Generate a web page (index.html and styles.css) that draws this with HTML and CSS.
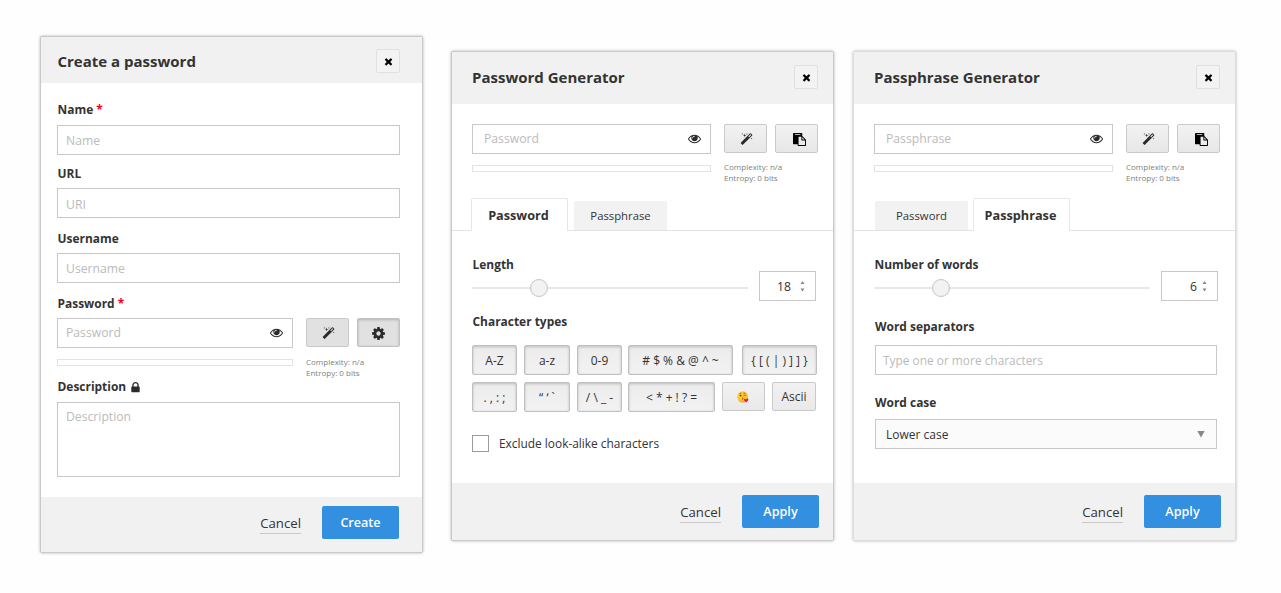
FILE: index.html
```html
<!DOCTYPE html>
<html lang="en">
<head>
<meta charset="utf-8">
<title>Password generator</title>
<link rel="stylesheet" href="styles.css">
</head>
<body>
<svg class="sprite" width="0" height="0">
  <symbol id="i-times" viewBox="0 0 1792 1792"><path d="M1490 1322q0 40-28 68l-136 136q-28 28-68 28t-68-28l-294-294-294 294q-28 28-68 28t-68-28l-136-136q-28-28-28-68t28-68l294-294-294-294q-28-28-28-68t28-68l136-136q28-28 68-28t68 28l294 294 294-294q28-28 68-28t68 28l136 136q28 28 28 68t-28 68l-294 294 294 294q28 28 28 68z"/></symbol>
  <symbol id="i-eye" viewBox="0 0 1792 1792"><path d="M1664 960q-152-236-381-353 61 104 61 225 0 185-131.500 316.500t-316.500 131.500-316.500-131.500-131.500-316.500q0-121 61-225-229 117-381 353 133 205 333.500 326.500t434.500 121.500 434.500-121.500 333.500-326.500zm-720-384q0-20-14-34t-34-14q-125 0-214.500 89.500t-89.500 214.500q0 20 14 34t34 14 34-14 14-34q0-86 61-147t147-61q20 0 34-14t14-34zm848 384q0 34-20 69-140 230-376.500 368.500t-499.500 138.500-499.500-139-376.500-368q-20-35-20-69t20-69q140-229 376.500-368t499.500-139 499.500 139 376.500 368q20 35 20 69z"/></symbol>
  <symbol id="i-cog" viewBox="0 0 1792 1792"><path d="M1152 896q0-106-75-181t-181-75-181 75-75 181 75 181 181 75 181-75 75-181zm512-109v222q0 12-8 23t-20 13l-185 28q-19 54-39 91 35 50 107 138 10 12 10 25t-9 23q-27 37-99 108t-94 71q-12 0-26-9l-138-108q-44 23-91 38-16 136-29 186-7 28-36 28h-222q-14 0-24.500-8.500t-11.500-21.500l-28-184q-49-16-90-37l-141 107q-10 9-25 9-14 0-25-11-126-114-165-168-7-10-7-23 0-12 8-23 15-21 51-66.500t54-70.500q-27-50-41-99l-183-27q-13-2-21-12.500t-8-23.500v-222q0-12 8-23t19-13l186-28q14-46 39-92-40-57-107-138-10-12-10-24 0-10 9-23 26-36 98.500-107.500t94.500-71.500q13 0 26 10l138 107q44-23 91-38 16-136 29-186 7-28 36-28h222q14 0 24.500 8.500t11.500 21.500l28 184q49 16 90 37l142-107q9-9 24-9 13 0 25 10 129 119 165 170 7 8 7 22 0 12-8 23-15 21-51 66.500t-54 70.500q26 50 41 98l183 28q13 2 21 12.500t8 23.500z"/></symbol>
  <symbol id="i-lock" viewBox="0 0 1792 1792"><path d="M640 768h512v-192q0-106-75-181t-181-75-181 75-75 181v192zm832 96v576q0 40-28 68t-68 28h-960q-40 0-68-28t-28-68v-576q0-40 28-68t68-28h32v-192q0-184 132-316t316-132 316 132 132 316v192h32q40 0 68 28t28 68z"/></symbol>
  <symbol id="i-paste" viewBox="0 0 1792 1792"><path d="M768 1664h896v-640h-416q-40 0-68-28t-28-68v-416h-384v1152zm256-1440v-64q0-13-9.500-22.500t-22.500-9.500h-704q-13 0-22.500 9.500t-9.500 22.500v64q0 13 9.500 22.500t22.500 9.500h704q13 0 22.500-9.500t9.500-22.500zm256 672h299l-299-299v299zm512 128v672q0 40-28 68t-68 28h-960q-40 0-68-28t-28-68v-160h-544q-40 0-68-28t-28-68v-1344q0-40 28-68t68-28h1088q40 0 68 28t28 68v328q21 13 36 28l408 408q28 28 48 76t20 88z"/></symbol>
  <symbol id="i-magic" viewBox="0 0 1792 1792"><path d="M1254 581l293-293-107-107-293 293zm447-293q0 27-18 45l-1286 1286q-18 18-45 18t-45-18l-198-198q-18-18-18-45t18-45l1286-1286q18-18 45-18t45 18l198 198q18 18 18 45zm-1351-190l98 30-98 30-30 98-30-98-98-30 98-30 30-98zm350 162l196 60-196 60-60 196-60-196-196-60 196-60 60-196zm930 478l98 30-98 30-30 98-30-98-98-30 98-30 30-98zm-640-640l98 30-98 30-30 98-30-98-98-30 98-30 30-98z"/></symbol>
  <symbol id="i-spin" viewBox="0 0 5 12"><path d="M.3 3.300L2.500 0l2.200 3.300zM.3 8.200h4.400L2.500 11.500z"/></symbol>
  <symbol id="i-kiss" viewBox="0 0 12 12"><circle cx="5.800" cy="5.800" r="5.500" fill="#fcc531"/><path d="M1.500 9.200a5.500 5.500 0 0 0 8 .6" fill="none" stroke="#ef9a2c" stroke-width=".9"/><circle cx="3.600" cy="4.500" r=".85" fill="#5e3a14"/><path d="M6.500 4.700q1.200-1 2.600-.2M2.400 2.800l1.700-.6M6.600 2.100l1.900.3M5 6.700q1.600.1.700.9 1.200.4-.5 1.300" fill="none" stroke="#6b4015" stroke-width=".6"/><path d="M9.300 11.600L6.900 9.300q-.4-1.600 1.100-1.500l.9.600q.8-1.500 2-.8.900.9.200 2z" fill="#e5223b"/></symbol>
</svg>
<main class="board">
  <section class="dialog dialog-create">
    <header class="head"><h2 class="title">Create a password</h2><button class="close"><svg class="ic-x"><use href="#i-times"/></svg></button></header>
    <div class="body">
      <div class="field field-name"><div class="label">Name <span class="req">*</span></div><div class="input">Name</div></div>
      <div class="field"><div class="label">URL</div><div class="input input-url">URI</div></div>
      <div class="field field-user"><div class="label">Username</div><div class="input">Username</div></div>
      <div class="field field-user">
        <div class="label">Password <span class="req">*</span></div>
        <div class="secret">
          <div class="entry"><div class="input">Password<svg class="ic-eye"><use href="#i-eye"/></svg></div><div class="meter"></div></div>
          <div class="tools">
            <div class="tool-row"><button class="btn tool flat"><svg class="ic-magic"><use href="#i-magic"/></svg></button><button class="btn tool flat pressed"><svg class="ic-cog"><use href="#i-cog"/></svg></button></div>
            <div class="hint">Complexity: n/a<br>Entropy: 0 bits</div>
          </div>
        </div>
      </div>
      <div class="field field-desc"><div class="label">Description <svg class="ic-lock"><use href="#i-lock"/></svg></div><div class="input area">Description</div></div>
    </div>
    <footer class="foot"><a class="cancel">Cancel</a><button class="primary">Create</button></footer>
  </section>

  <section class="dialog dialog-gen">
    <header class="head"><h2 class="title">Password Generator</h2><button class="close"><svg class="ic-x"><use href="#i-times"/></svg></button></header>
    <div class="body">
      <div class="secret">
        <div class="entry"><div class="input">Password<svg class="ic-eye"><use href="#i-eye"/></svg></div><div class="meter"></div></div>
        <div class="tools">
          <div class="tool-row"><button class="btn tool"><svg class="ic-magic"><use href="#i-magic"/></svg></button><button class="btn tool"><svg class="ic-paste"><use href="#i-paste"/></svg></button></div>
          <div class="hint">Complexity: n/a<br>Entropy: 0 bits</div>
        </div>
      </div>
      <nav class="tabs"><span class="tab active">Password</span><span class="tab">Passphrase</span></nav>
      <div class="range"><div class="range-main"><div class="label">Length</div><div class="slider"><span class="knob"></span></div></div><div class="number">18<svg class="ic-spin"><use href="#i-spin"/></svg></div></div>
      <div class="label label-types">Character types</div>
      <div class="chips">
        <div class="chip-row"><button class="btn chip pressed w-a">A-Z</button><button class="btn chip pressed w-b">a-z</button><button class="btn chip pressed w-h">0-9</button><button class="btn chip pressed w-c"># $ % &amp; @ ^ ~</button><button class="btn chip pressed w-d">{ [ ( | ) ] ] }</button></div>
        <div class="chip-row"><button class="btn chip pressed w-a">. , : ;</button><button class="btn chip pressed w-b">“ ‘ `</button><button class="btn chip pressed w-h">/ \ _ -</button><button class="btn chip pressed w-e">&lt; * + ! ? =</button><button class="btn chip w-f"><svg class="ic-kiss"><use href="#i-kiss"/></svg></button><button class="btn chip w-g">Ascii</button></div>
      </div>
      <label class="check"><span class="box"></span>Exclude look-alike characters</label>
    </div>
    <footer class="foot"><a class="cancel">Cancel</a><button class="primary">Apply</button></footer>
  </section>

  <section class="dialog dialog-gen dialog-phrase">
    <header class="head"><h2 class="title">Passphrase Generator</h2><button class="close"><svg class="ic-x"><use href="#i-times"/></svg></button></header>
    <div class="body">
      <div class="secret">
        <div class="entry"><div class="input">Passphrase<svg class="ic-eye"><use href="#i-eye"/></svg></div><div class="meter"></div></div>
        <div class="tools">
          <div class="tool-row"><button class="btn tool"><svg class="ic-magic"><use href="#i-magic"/></svg></button><button class="btn tool"><svg class="ic-paste"><use href="#i-paste"/></svg></button></div>
          <div class="hint">Complexity: n/a<br>Entropy: 0 bits</div>
        </div>
      </div>
      <nav class="tabs"><span class="tab">Password</span><span class="tab active">Passphrase</span></nav>
      <div class="range"><div class="range-main"><div class="label">Number of words</div><div class="slider"><span class="knob"></span></div></div><div class="number tight">6<svg class="ic-spin"><use href="#i-spin"/></svg></div></div>
      <div class="options">
        <div class="label">Word separators</div>
        <div class="input input-sep">Type one or more characters</div>
        <div class="label">Word case</div>
        <div class="select">Lower case<span class="caret"></span></div>
      </div>
    </div>
    <footer class="foot"><a class="cancel">Cancel</a><button class="primary">Apply</button></footer>
  </section>
</main>
</body>
</html>
```

FILE: styles.css
```css
* { box-sizing: border-box; }
body { margin: 0; background: #fefefe; color: #333; font-family: "Open Sans", "Noto Sans", sans-serif; font-size: 12px; }
button { font-family: inherit; padding: 0; color: inherit; }
svg { display: block; fill: #2b2b2b; }
.sprite { position: absolute; }

.board { display: flex; align-items: flex-start; width: 1281px; height: 593px; padding: 36px 0 0 40px; overflow: hidden; }
.dialog { display: flex; flex-direction: column; flex: none; width: 383px; height: 517px; border: 1px solid #c9c9c9; border-radius: 2px; background: #fff; box-shadow: 0 0 3px rgba(0,0,0,.3); }
.dialog-gen { height: 490px; margin: 15px 0 0 28px; }
.dialog-phrase { margin-left: 19px; border-color: #dcdcdc; }

.head { display: flex; align-items: center; justify-content: space-between; flex: none; height: 46px; padding: 2px 22px 0 16.5px; background: #f1f1f1; }
.title { margin: 0; font-size: 15px; font-weight: 700; line-height: 20px; }
.close { display: flex; align-items: center; justify-content: center; width: 24px; height: 24px; border: 1px solid #e0e0e0; border-radius: 2px; background: #f3f3f3; }
.ic-x { width: 11px; height: 11px; fill: #000; }
.body { flex: 1; padding: 18px 22px 0 16px; }
.dialog-gen .head { height: 52px; padding: 0 15px 2px 20px; }
.dialog-gen .body { padding: 20px 0 0 20px; }

.label { display: flex; align-items: center; gap: 4px; height: 18px; padding-left: .5px; font-size: 11.950px; font-weight: 700; line-height: 18px; }
.req { margin-left: -1px; color: #f8001a; }
.field { display: flex; flex-direction: column; gap: 5px; margin-top: 10px; }
.field-name { gap: 6px; margin-top: 0; }
.field-user { margin-top: 12px; }
.field-desc { gap: 6px; margin-top: -1px; }
.input { display: flex; align-items: center; justify-content: space-between; height: 30px; padding: 0 9px 0 8px; border: 1px solid #c8c8c8; background: #fff; color: #bbb; font-size: 12.200px; }
.input-url { padding-top: 2px; }
.area { align-items: flex-start; height: 75px; padding-top: 5px; line-height: 17px; }
.ic-eye { width: 13px; height: 13px; }
.ic-lock { width: 13px; height: 13px; margin-left: -1px; }

.secret { display: flex; gap: 13px; height: 61px; }
.secret .input { padding-bottom: 1px; }
.entry { width: 236px; }
.meter { height: 7px; margin-top: 11px; border: 1px solid #e3e3e3; }
.tool-row { display: flex; gap: 8px; }
.btn { display: flex; align-items: center; justify-content: center; border: 1px solid #c9c9c9; border-radius: 2px; background: linear-gradient(#f2f2f2, #e7e7e7); }
.tool { width: 43px; height: 29px; }
.flat { background: #e1e1e1; }
.pressed { box-shadow: inset 0 1px 3px rgba(0,0,0,.2); border-color: #c0c0c0; }
.ic-magic { width: 13px; height: 13px; margin: 1px 0 0 2px; }
.ic-cog { width: 15px; height: 15px; margin-top: 1px; }
.ic-paste { width: 13px; height: 13px; margin: 1px 0 0 5px; fill: #000; }
.hint { margin: 8px 0 0; color: #808080; font-size: 8px; line-height: 11px; }
.dialog-create .hint { margin-top: 9px; }
.dialog-gen .secret { height: 74px; }
.dialog-gen .entry { width: 239px; }
.dialog-gen .entry .input { padding-left: 11px; }

.tabs { display: flex; align-items: flex-end; gap: 6px; height: 33px; margin-left: -20px; padding-left: 19px; border-bottom: 1px solid #e3e3e3; }
.dialog-phrase .tabs { gap: 5px; padding-left: 21px; }
.tab { display: flex; align-items: center; justify-content: center; width: 93px; height: 29px; border-radius: 2px 2px 0 0; background: #f2f2f2; font-size: 11.300px; }
.active { width: 97px; height: 33px; margin-bottom: -1px; padding-right: 2px; border: 1px solid #e6e6e6; border-bottom: 0; background: #fff; font-size: 12.700px; font-weight: 700; }

.range { display: flex; gap: 11px; height: 70px; padding-top: 25px; }
.range-main { width: 276px; }
.slider { display: flex; align-items: center; height: 2px; margin-top: 13px; background: #e8e8e8; }
.knob { width: 18px; height: 18px; margin-left: 57.500px; border: 1px solid #c6c6c6; border-radius: 50%; background: #f2f2f2; }
.number { display: flex; align-items: center; justify-content: flex-end; gap: 9px; width: 57px; height: 30px; margin-top: 15px; padding-right: 10px; border: 1px solid #c8c8c8; font-size: 12.200px; }
.tight { gap: 5px; }
.ic-spin { width: 5px; height: 11px; fill: #888; }
.label-types { margin-top: 12px; }
.chips { display: flex; flex-direction: column; gap: 7px; margin-top: 14px; }
.chip-row { display: flex; height: 30px; }
.chip { height: 30px; background: linear-gradient(#ececec, #f2f2f2); font-size: 12px; }
.w-a { width: 45px; margin-right: 7px; }
.w-b { width: 46px; margin-right: 7px; }
.w-h { width: 45px; margin-right: 6px; }
.w-c { width: 105px; margin-right: 9px; }
.w-d { width: 75px; }
.w-e { width: 87px; margin-right: 7px; }
.w-f { width: 43px; height: 29px; margin-right: 7px; padding-right: 1px; background: linear-gradient(#f2f2f2, #e9e9e9); }
.w-g { width: 44px; height: 29px; background: linear-gradient(#f2f2f2, #e9e9e9); }
.ic-kiss { width: 12px; height: 12px; }
.check { display: flex; align-items: center; gap: 10px; margin-top: 23px; height: 16px; font-size: 11.900px; }
.box { width: 17px; height: 17px; border: 1px solid #9b9b9b; background: #fff; }

.options { width: 343px; margin-left: 1px; padding-top: 17px; }
.options .label { padding-left: 0; }
.options .input, .select { width: 342px; }
.input-sep { margin: 9px 0 19px; padding-left: 7px; font-size: 11.900px; }
.select { display: flex; align-items: center; justify-content: space-between; height: 30px; margin-top: 7px; padding: 0 11px 0 10px; border: 1px solid #c8c8c8; background: #fbfbfb; font-size: 12px; }
.caret { width: 8px; height: 7px; background: #888; clip-path: polygon(0 0, 100% 0, 50% 100%); }

.foot { display: flex; align-items: flex-start; justify-content: flex-end; gap: 21px; flex: none; height: 55px; padding: 9px 23px 0 0; background: #f1f1f1; }
.dialog-gen .foot { height: 57px; padding: 12px 14px 0 0; }
.cancel { margin-top: 7px; border-bottom: 1px solid #c8c8c8; font-size: 13.200px; line-height: 20px; }
.primary { width: 77px; height: 33px; border: 0; border-radius: 2px; background: #338fdf; color: #fff; font-size: 12.600px; font-weight: 600; }
```
